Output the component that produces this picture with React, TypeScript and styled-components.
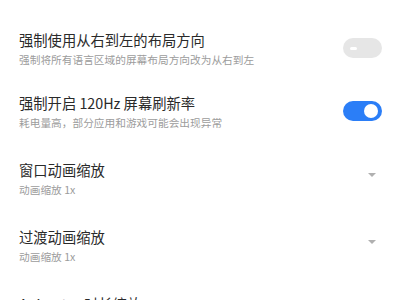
import React from "react";
import styled, { createGlobalStyle } from "styled-components";

const GlobalStyle = createGlobalStyle`
  html, body {
    margin: 0;
    padding: 0;
    background: #fff;
  }
  body {
    width: 400px;
    height: 300px;
    overflow: hidden;
    font-family: "Noto Sans CJK SC", "Noto Sans", sans-serif;
  }
`;

const List = styled.div`
  display: flex;
  flex-direction: column;
  padding: 17px 18px 0 19px;
`;

const Row = styled.div<{ $tall?: boolean }>`
  display: flex;
  align-items: center;
  justify-content: space-between;
  padding: ${p => (p.$tall ? "17px 0 12px" : "13px 0 12px")};
`;

const Texts = styled.div`
  display: flex;
  flex-direction: column;
  gap: 2px;
  min-width: 0;
`;

const Title = styled.div`
  font-size: 14.3px;
  line-height: 20px;
  color: #2a2a2a;
  white-space: nowrap;
`;

const Summary = styled.div`
  font-size: 10.7px;
  line-height: 16px;
  color: #9c9c9c;
  white-space: nowrap;
`;

const Switch = styled.div<{ $on?: boolean }>`
  position: relative;
  flex: none;
  width: 39px;
  height: 20px;
  border-radius: 10px;
  background: ${p => (p.$on ? "#2b7ef7" : "#e6e6e6")};
  margin-bottom: 3px;
`;

const Knob = styled.span`
  position: absolute;
  top: 3px;
  right: 4px;
  width: 14px;
  height: 14px;
  border-radius: 50%;
  background: #fff;
`;

const Dash = styled.span`
  position: absolute;
  top: 9px;
  left: 7px;
  width: 7px;
  height: 3px;
  border-radius: 1.5px;
  background: #fff;
`;

const Arrow = styled.span`
  flex: none;
  width: 0;
  height: 0;
  border-left: 4px solid transparent;
  border-right: 4px solid transparent;
  border-top: 4px solid #b0b0b0;
  margin-right: 6px;
  margin-bottom: 8px;
`;

type Item =
  | { title: string; summary: string; kind: "switch"; on: boolean }
  | { title: string; summary: string; kind: "select" };

const items: Item[] = [
  {
    title: "强制使用从右到左的布局方向",
    summary: "强制将所有语言区域的屏幕布局方向改为从右到左",
    kind: "switch",
    on: false,
  },
  {
    title: "强制开启 120Hz 屏幕刷新率",
    summary: "耗电量高，部分应用和游戏可能会出现异常",
    kind: "switch",
    on: true,
  },
  { title: "窗口动画缩放", summary: "动画缩放 1x", kind: "select" },
  { title: "过渡动画缩放", summary: "动画缩放 1x", kind: "select" },
  { title: "Animator 时长缩放", summary: "动画缩放 1x", kind: "select" },
];

const App = () => {
  return (
    <>
      <GlobalStyle />
      <List>
        {items.map(item => (
          <Row key={item.title} $tall={item.kind === "select"}>
            <Texts>
              <Title>{item.title}</Title>
              <Summary>{item.summary}</Summary>
            </Texts>
            {item.kind === "switch" ? (
              <Switch $on={item.on}>{item.on ? <Knob /> : <Dash />}</Switch>
            ) : (
              <Arrow />
            )}
          </Row>
        ))}
      </List>
    </>
  );
};

export default App;
